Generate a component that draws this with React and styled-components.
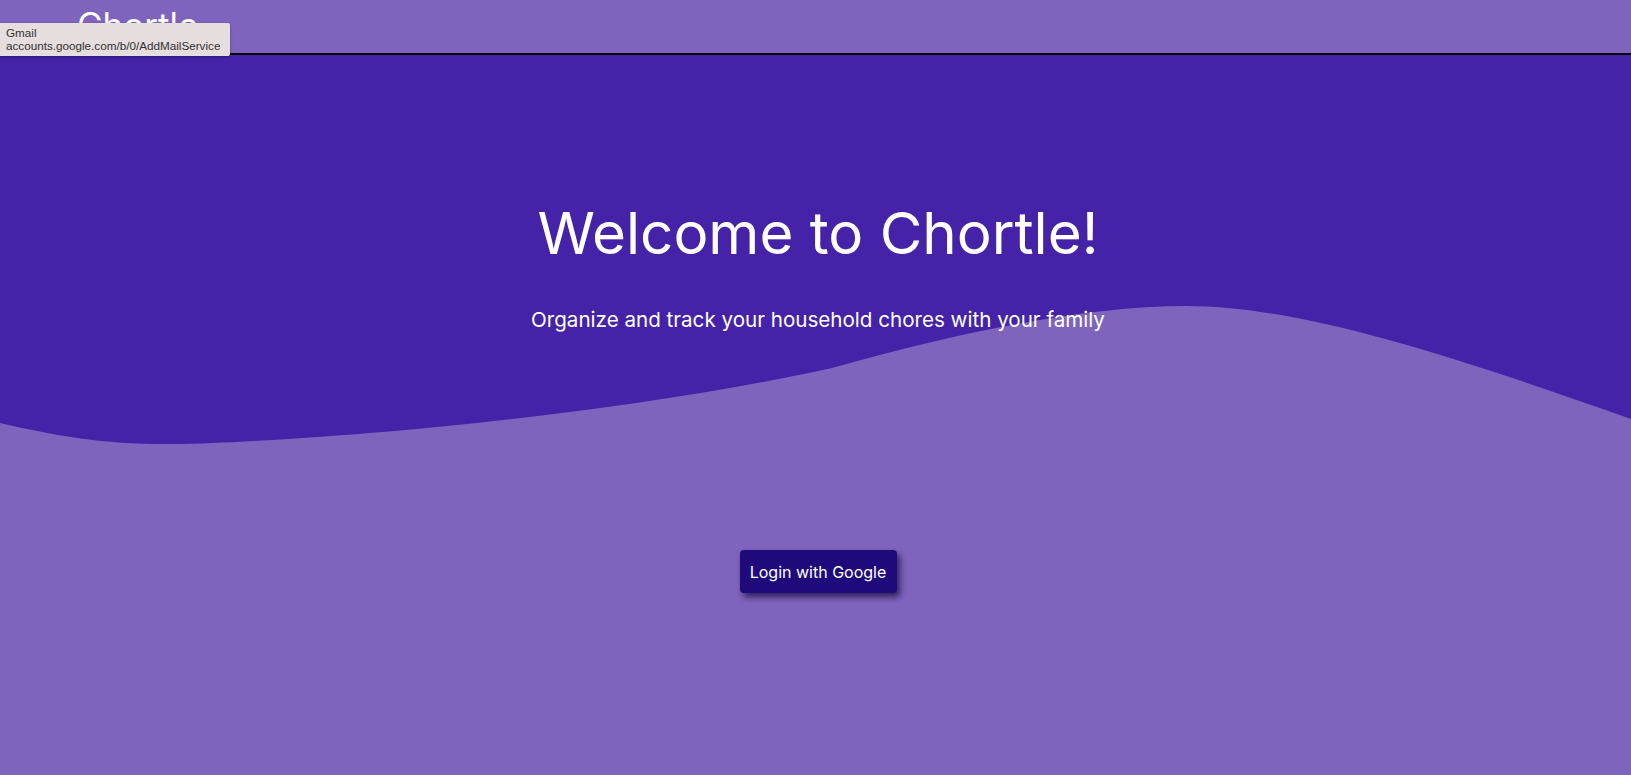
import React from "react";
import styled, { createGlobalStyle } from "styled-components";

const Global = createGlobalStyle`
  html, body { margin: 0; padding: 0; }
  body {
    background: #7e64bc;
    font-family: Inter, "Noto Sans", sans-serif;
    overflow: hidden;
  }
`;

const Page = styled.div`
  min-height: 775px;
  display: flex;
  flex-direction: column;
  background: #7e64bc;
  position: relative;
`;

const Header = styled.header`
  height: 53px;
  background: #7e64bc;
  border-bottom: 2px solid #000;
  display: flex;
  align-items: flex-start;
  padding-left: 77px;
  box-sizing: content-box;
  overflow: hidden;
`;

const Brand = styled.h1`
  margin: 0;
  margin-top: 4px;
  font-size: 35px;
  font-weight: 400;
  color: #fff;
  line-height: 1.2;
`;

const Hero = styled.section`
  position: relative;
  height: 400px;
  background: #4423a8;
  display: flex;
  flex-direction: column;
  align-items: center;
  padding-top: 143px;
  padding-left: 5px;
  box-sizing: border-box;
`;

const Wave = styled.svg`
  position: absolute;
  left: 0;
  bottom: 0;
  width: 100%;
  height: 160px;
  display: block;
`;

const Title = styled.h2`
  position: relative;
  margin: 0;
  font-size: 58.3px;
  font-weight: 400;
  color: #fff;
  line-height: 1.21;
`;

const Subtitle = styled.p`
  position: relative;
  margin: 39px 0 0;
  font-size: 20.6px;
  color: #fff;
  line-height: 1.21;
`;

const Actions = styled.div`
  display: flex;
  justify-content: center;
  padding-top: 95px;
  padding-left: 5px;
`;

const LoginButton = styled.button`
  height: 43px;
  padding: 0 10px;
  width: 157px;
  border: none;
  border-radius: 4px;
  background: #1e0a7a;
  color: #fff;
  font-family: Inter, "Noto Sans", sans-serif;
  font-size: 16px;
  box-shadow: 3px 4px 6px rgba(20, 10, 60, 0.75);
  cursor: pointer;
`;

const Tooltip = styled.div`
  position: absolute;
  left: 0;
  top: 23px;
  width: 230px;
  height: 33px;
  box-sizing: border-box;
  padding: 3px 6px;
  background: #e6dddf;
  color: #333;
  font-family: "Liberation Sans", Arial, sans-serif;
  font-size: 11.7px;
  line-height: 13px;
  border-radius: 0 2px 2px 0;
  box-shadow: 0 1px 3px rgba(0, 0, 0, 0.35);
  white-space: nowrap;
`;

export default function App() {
  return (
    <>
      <Global />
      <Page>
        <Header>
          <Brand>Chortle</Brand>
        </Header>
        <Hero>
          <Wave viewBox="0 0 1631 160" preserveAspectRatio="none">
            <path
              d="M0 128 C60 142 110 150 175 149 C300 147 600 124 832 73 C950 40 1080 11 1186 11 C1300 11 1450 60 1631 124 L1631 160 L0 160 Z"
              fill="#7e64bc"
            />
          </Wave>
          <Title>Welcome to Chortle!</Title>
          <Subtitle>Organize and track your household chores with your family</Subtitle>
        </Hero>
        <Actions>
          <LoginButton>Login with Google</LoginButton>
        </Actions>
        <Tooltip>
          Gmail
          <br />
          accounts.google.com/b/0/AddMailService
        </Tooltip>
      </Page>
    </>
  );
}
